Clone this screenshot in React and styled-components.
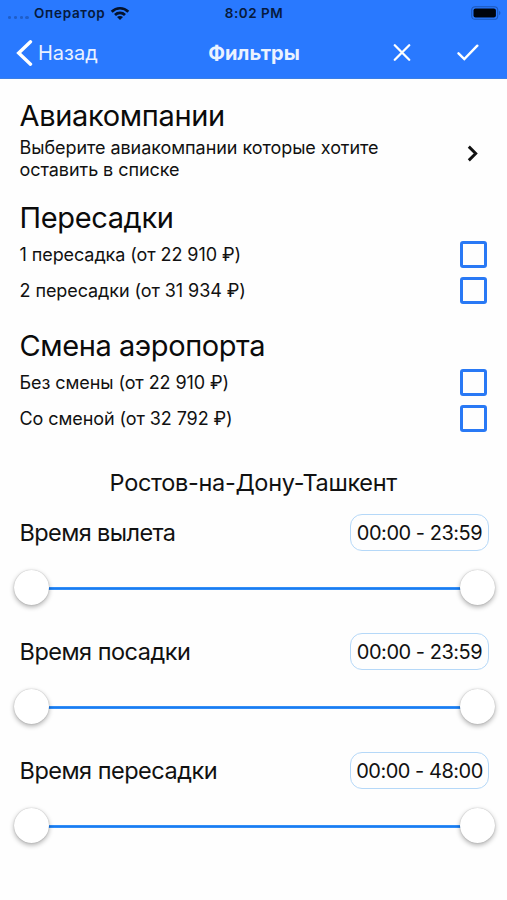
import React from "react";
import styled, { createGlobalStyle } from "styled-components";

const GlobalStyle = createGlobalStyle`
  * { box-sizing: border-box; }
  body {
    margin: 0;
    background: #fefefe;
    color: #111;
    font-family: Inter, "Liberation Sans", sans-serif;
  }
`;

const Screen = styled.div`
  width: 507px;
  height: 900px;
  overflow: hidden;
  background: #fefefe;
`;

const Header = styled.header`
  height: 79px;
  background: #2979ff;
  border-bottom: 1px solid #3b7fe6;
`;

const StatusBar = styled.div`
  display: grid;
  grid-template-columns: 1fr auto 1fr;
  align-items: center;
  height: 26px;
  padding: 0 5px 0 8px;
  color: #061a3d;
  font-size: 13px;
  font-weight: 600;
  line-height: 26px;
  white-space: nowrap;
`;

const Carrier = styled.div`
  display: flex;
  align-items: center;
`;

const SignalDots = styled.div`
  display: flex;
  gap: 2.4px;
  width: 26px;
  padding-top: 8px;
`;

const Dot = styled.i`
  width: 3.4px;
  height: 3px;
  border-radius: 50%;
  background: #1f5ec9;
`;

const CarrierName = styled.span`
  width: 76px;
  font-size: 13.5px;
  letter-spacing: 0.7px;
`;

const Clock = styled.span`
  margin-right: 2px;
  font-size: 13.5px;
  letter-spacing: 0.5px;
`;

const BatterySlot = styled.div`
  display: flex;
  justify-content: flex-end;
`;

const NavBar = styled.nav`
  display: grid;
  grid-template-columns: 192px 124px 1fr;
  align-items: center;
  height: 53px;
  color: #fff;
`;

const BackButton = styled.div`
  display: flex;
  align-items: center;
  gap: 5px;
  padding-left: 16px;
  color: #e9f1ff;
  font-size: 20px;
`;

const NavTitle = styled.div`
  color: #eaf2ff;
  text-align: center;
  font-size: 20px;
  font-weight: 700;
  white-space: nowrap;
`;

const NavActions = styled.div`
  display: flex;
  align-items: center;
  justify-content: space-between;
  padding: 0 28px 0 77px;
`;

const Content = styled.main`
  padding: 20px 20px 0 19.5px;
`;

const Section = styled.section`
  margin-bottom: ${(p) => p.$gap}px;
`;

const Heading = styled.h2`
  margin: 0;
  height: 36px;
  font-size: 29px;
  font-weight: 400;
  line-height: ${(p) => p.$line || 34}px;
  letter-spacing: ${(p) => p.$tracking}px;
  white-space: nowrap;
  color: #0b0b0b;
`;

const AirlineRow = styled.div`
  display: flex;
  align-items: center;
  justify-content: space-between;
  height: 46px;
  padding: 2px 9.5px 0 0;
`;

const Description = styled.p`
  margin: 0;
  width: 380px;
  font-size: 18px;
  line-height: 21.7px;
  letter-spacing: -0.06px;
`;

const OptionRow = styled.div`
  display: flex;
  align-items: center;
  justify-content: space-between;
  height: 36.5px;
  font-size: 18px;
  letter-spacing: -0.08px;
`;

const Checkbox = styled.span`
  width: 27px;
  height: 27px;
  border: 3px solid #2979f5;
  border-radius: 3px;
`;

const RouteTitle = styled.h3`
  margin: 0;
  height: 50px;
  font-size: 23.5px;
  font-weight: 400;
  line-height: 52px;
  text-align: center;
  letter-spacing: -0.32px;
`;

const RangeBlock = styled.div`
  height: 119px;
`;

const RangeHeader = styled.div`
  display: flex;
  align-items: center;
  justify-content: space-between;
  height: 51px;
  margin-right: -2px;
  font-size: 23.5px;
  letter-spacing: ${(p) => p.$tracking}px;
`;

const RangeValue = styled.div`
  display: flex;
  align-items: center;
  justify-content: center;
  width: 139px;
  height: 37px;
  padding-top: 2px;
  border: 1.5px solid #b5d8f8;
  border-radius: 12px;
  font-size: 20px;
  letter-spacing: -0.48px;
  white-space: nowrap;
`;

const Slider = styled.div`
  display: flex;
  align-items: center;
  height: 59px;
  margin: 0 -8px 0 -6.5px;
`;

const Track = styled.div`
  flex: 1;
  height: 3px;
  margin: 2px -2px 0;
  background: linear-gradient(#3d96fa, #1a7cf0 50%, #3d96fa);
`;

const Knob = styled.div`
  z-index: 1;
  width: 35px;
  height: 35px;
  margin: 0 0.5px;
  border-radius: 50%;
  background: #fff;
  box-shadow: 0 2px 5px rgba(0, 0, 0, 0.32), 0 0 1px rgba(0, 0, 0, 0.3);
`;

const WifiIcon = () => (
  <svg width="20" height="15" viewBox="0 0 20 15">
    <g fill="none" stroke="#04122c" strokeWidth="2.7">
      <path d="M1.7 5.7C6.3 1.1 13.7 1.1 18.3 5.7" />
      <path d="M5 9C7.8 6.2 12.2 6.2 15 9" />
    </g>
    <path d="M7 11C8.7 9.5 11.3 9.5 13 11L10 14Z" fill="#04122c" />
  </svg>
);

const BatteryIcon = () => (
  <svg width="31" height="14" viewBox="0 0 31 14">
    <rect x="0.7" y="0.7" width="26" height="12.6" rx="3.4" fill="none" stroke="#1d57b8" strokeWidth="1.1" />
    <rect x="2.5" y="2.4" width="22.4" height="9.2" rx="2" fill="#00040c" />
    <path d="M28.2 4.8C29.8 5.5 29.8 8.5 28.2 9.2Z" fill="#1d57b8" />
  </svg>
);

const BackIcon = () => (
  <svg width="17" height="26" viewBox="0 0 17 26">
    <path d="M14.5 1.8L2.7 13L14.5 24.2" fill="none" stroke="#fff" strokeWidth="3.4" strokeLinecap="round" strokeLinejoin="miter" />
  </svg>
);

const CloseIcon = () => (
  <svg width="18" height="18" viewBox="0 0 18 18">
    <path d="M1.8 1.3L16.2 15.7M16.2 1.3L1.8 15.7" stroke="#fff" strokeWidth="2.3" strokeLinecap="round" />
  </svg>
);

const CheckIcon = () => (
  <svg width="22" height="17" viewBox="0 0 22 17">
    <path d="M1.5 9.3L7.3 15L20.3 1.7" fill="none" stroke="#fff" strokeWidth="2.4" strokeLinecap="round" />
  </svg>
);

const ForwardIcon = () => (
  <svg width="11" height="17" viewBox="0 0 11 17">
    <path d="M1.8 1.6L8.7 8.5L1.8 15.4" fill="none" stroke="#111" strokeWidth="2.9" />
  </svg>
);

const ForwardSlot = styled.div`
  display: flex;
  padding-bottom: 11px;
`;

const Option = ({ label }) => (
  <OptionRow>
    {label}
    <Checkbox />
  </OptionRow>
);

const TimeRange = ({ label, value, tracking }) => (
  <RangeBlock>
    <RangeHeader $tracking={tracking}>
      {label}
      <RangeValue>{value}</RangeValue>
    </RangeHeader>
    <Slider>
      <Knob />
      <Track />
      <Knob />
    </Slider>
  </RangeBlock>
);

export default function App() {
  return (
    <Screen>
      <GlobalStyle />
      <Header>
        <StatusBar>
          <Carrier>
            <SignalDots>
              <Dot />
              <Dot />
              <Dot />
              <Dot />
            </SignalDots>
            <CarrierName>Оператор</CarrierName>
            <WifiIcon />
          </Carrier>
          <Clock>8:02 PM</Clock>
          <BatterySlot>
            <BatteryIcon />
          </BatterySlot>
        </StatusBar>
        <NavBar>
          <BackButton>
            <BackIcon />
            Назад
          </BackButton>
          <NavTitle>Фильтры</NavTitle>
          <NavActions>
            <CloseIcon />
            <CheckIcon />
          </NavActions>
        </NavBar>
      </Header>
      <Content>
        <Section $gap={19}>
          <Heading $tracking={-0.34}>Авиакомпании</Heading>
          <AirlineRow>
            <Description>Выберите авиакомпании которые хотите оставить в списке</Description>
            <ForwardSlot>
              <ForwardIcon />
            </ForwardSlot>
          </AirlineRow>
        </Section>
        <Section $gap={19}>
          <Heading $tracking={-0.36} $line={35}>Пересадки</Heading>
          <Option label="1 пересадка (от 22 910 ₽)" />
          <Option label="2 пересадки (от 31 934 ₽)" />
        </Section>
        <Section $gap={19.5}>
          <Heading $tracking={-0.42} $line={36}>Смена аэропорта</Heading>
          <Option label="Без смены (от 22 910 ₽)" />
          <Option label="Со сменой (от 32 792 ₽)" />
        </Section>
        <RouteTitle>Ростов-на-Дону-Ташкент</RouteTitle>
        <TimeRange label="Время вылета" value="00:00 - 23:59" tracking={-0.6} />
        <TimeRange label="Время посадки" value="00:00 - 23:59" tracking={-0.5} />
        <TimeRange label="Время пересадки" value="00:00 - 48:00" tracking={-0.5} />
      </Content>
    </Screen>
  );
}
